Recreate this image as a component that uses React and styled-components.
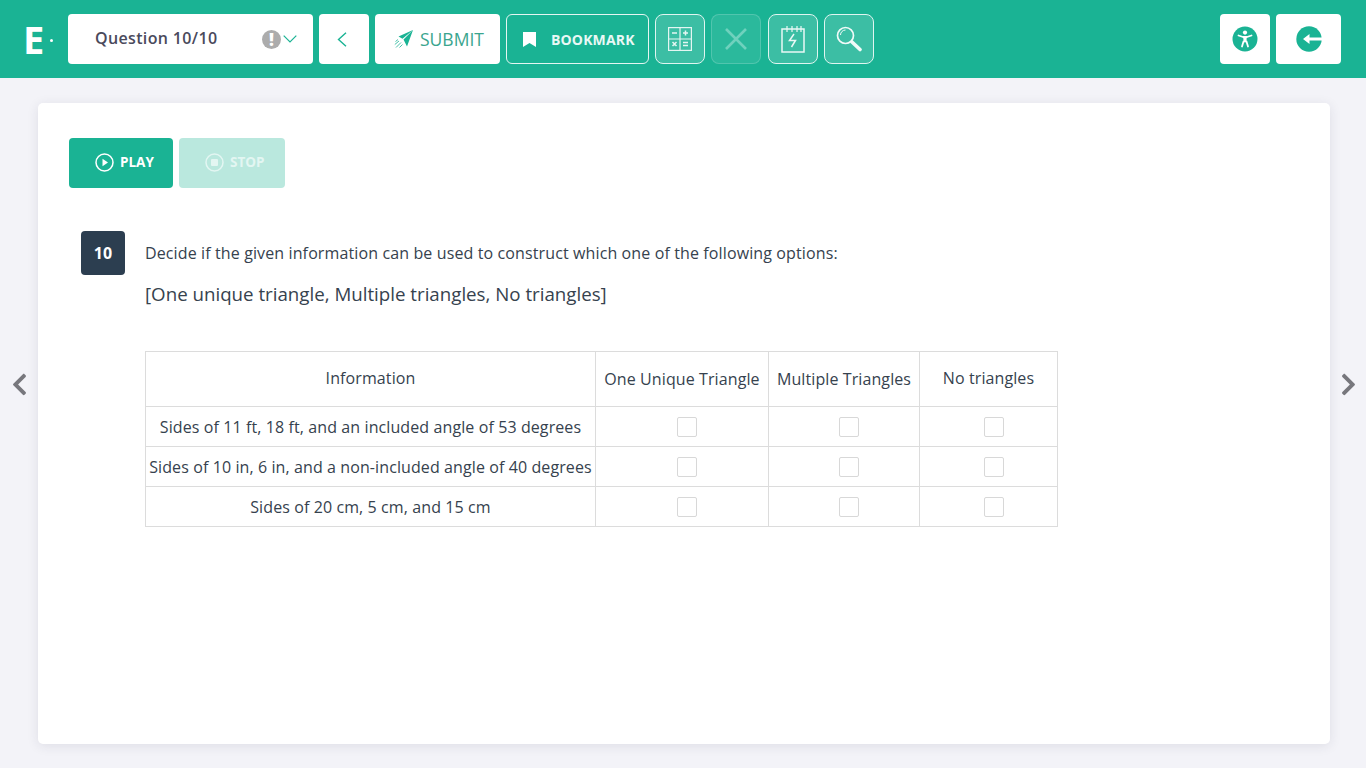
import React from "react";
import styled, { createGlobalStyle } from "styled-components";
import { FaChevronLeft, FaChevronRight } from "react-icons/fa";

const GlobalStyle = createGlobalStyle`
  html, body {
    margin: 0;
    padding: 0;
    background: #f3f3f8;
    font-family: "Open Sans", "Liberation Sans", sans-serif;
    color: #2f3d4c;
  }
  * { box-sizing: border-box; }
`;

const Page = styled.div`
  width: 1366px;
  height: 768px;
  overflow: hidden;
  display: flex;
  flex-direction: column;
`;

const Header = styled.header`
  height: 78px;
  flex: none;
  background: #1ab394;
  display: flex;
  align-items: flex-start;
  justify-content: space-between;
  padding: 14px 25px 0 25px;
`;

const ToolGroup = styled.div`
  display: flex;
  align-items: center;
`;

const Logo = styled.div`
  width: 43px;
  height: 50px;
  display: flex;
  align-items: center;
  flex: none;
  margin-left: -2px;
  margin-right: 2px;
  color: #fff;
  font-size: 38px;
  font-weight: 700;
  line-height: 1;
  span {
    width: 3px;
    height: 3px;
    margin: 2px 0 0 6px;
    border-radius: 50%;
    background: #fff;
  }
`;

const QuestionSelect = styled.div`
  width: 245px;
  height: 50px;
  background: #fff;
  border-radius: 4px;
  display: flex;
  align-items: center;
  padding: 0 16px 0 27px;
  font-size: 16px;
  font-weight: 600;
  letter-spacing: 0.35px;
  color: #4a4a5c;
  b {
    flex: 1;
    font-weight: 600;
    margin-top: -2px;
  }
`;

const Alert = styled.i`
  width: 19px;
  height: 19px;
  border-radius: 50%;
  background: #acacac;
  color: #fff;
  font-size: 17px;
  font-weight: 800;
  font-style: normal;
  letter-spacing: 0;
  line-height: 19px;
  text-align: center;
`;

const SolidButton = styled.button`
  width: ${(p) => p.$w}px;
  height: 50px;
  margin-left: ${(p) => p.$gap ?? 6}px;
  padding: 0;
  border: 0;
  border-radius: 4px;
  background: #fff;
  color: #1ab394;
  display: flex;
  align-items: center;
  justify-content: center;
  font-family: inherit;
`;

const BackButton = styled(SolidButton)`
  padding-right: 4px;
`;

const SubmitButton = styled(SolidButton)`
  justify-content: flex-start;
  padding-left: 19px;
`;

const SubmitLabel = styled.span`
  font-size: 17.5px;
  margin-left: 7px;
  color: #3aa58e;
`;

const BookmarkButton = styled.button`
  width: 143px;
  height: 50px;
  margin-left: 6px;
  padding: 0 0 0 16px;
  border: 1px solid #e4f6f2;
  border-radius: 6px;
  background: transparent;
  color: #e9f8f5;
  display: flex;
  align-items: center;
  font-family: inherit;
  font-size: 14px;
  font-weight: 700;
  letter-spacing: 0.15px;
  span {
    margin-left: 15px;
  }
`;

const GhostButton = styled.button`
  width: 50px;
  height: 50px;
  margin-left: ${(p) => p.$gap ?? 6}px;
  padding: 0;
  border-radius: 8px;
  border: 1px solid ${(p) => (p.$off ? "rgba(255,255,255,0.18)" : "#dff5f0")};
  background: rgba(255, 255, 255, ${(p) => (p.$off ? 0.08 : 0.15)});
  display: flex;
  align-items: center;
  justify-content: center;
`;

const Body = styled.main`
  flex: 1;
  display: flex;
  padding: 25px 0 24px;
`;

const Gutter = styled.div`
  width: ${(p) => p.$w}px;
  flex: none;
  display: flex;
  align-items: center;
  justify-content: center;
  padding-bottom: 78px;
  color: #77777d;
  font-size: 25px;
`;

const Card = styled.section`
  flex: 1;
  background: #fff;
  border-radius: 5px;
  box-shadow: 0 2px 12px rgba(40, 40, 70, 0.1);
  padding: 35px 31px;
`;

const AudioRow = styled.div`
  display: flex;
  gap: 6px;
`;

const AudioButton = styled.button`
  width: ${(p) => p.$w}px;
  height: 50px;
  padding: 0 0 2px 26px;
  border: 0;
  border-radius: 4px;
  background: ${(p) => (p.$off ? "#bae8de" : "#1ab394")};
  color: ${(p) => (p.$off ? "#e3f6f2" : "#fff")};
  display: flex;
  align-items: center;
  gap: 6px;
  font-family: inherit;
  font-size: 13.5px;
  font-weight: 700;
`;

const Question = styled.div`
  display: flex;
  margin: 43px 0 0 12px;
`;

const NumberBadge = styled.div`
  width: 44px;
  height: 44px;
  flex: none;
  border-radius: 4px;
  background: #2c3e50;
  color: #fff;
  font-size: 16px;
  font-weight: 700;
  line-height: 44px;
  text-align: center;
`;

const QuestionBody = styled.div`
  margin-left: 20px;
`;

const Prompt = styled.p`
  margin: 10px 0 0;
  font-size: 16px;
  line-height: 24px;
  letter-spacing: 0.12px;
  color: #36424e;
`;

const Options = styled.p`
  margin: 16px 0 0;
  font-size: 18.72px;
  line-height: 26px;
  color: #36424e;
`;

const Table = styled.table`
  margin-top: 44px;
  border-collapse: collapse;
  table-layout: fixed;
  width: 912px;
  font-size: 16px;
  letter-spacing: 0.1px;
  color: #36424e;
  th, td {
    border: 1px solid #dcdcdc;
    padding: 0;
    text-align: center;
    font-weight: 400;
    white-space: nowrap;
  }
  thead tr { height: 55px; }
  tbody tr { height: 40px; }
`;

const HeadText = styled.span`
  position: relative;
  top: ${(p) => (p.$up ? -1 : 0)}px;
`;

const Check = styled.span`
  display: block;
  width: 20px;
  height: 20px;
  margin: 0 auto;
  position: relative;
  left: 5px;
  border: 1px solid #d8d8d8;
  border-radius: 2px;
  background: #fff;
`;

const Send = () => (
  <svg width="19" height="18" viewBox="0 0 19 18" fill="#1ab394">
    <path d="M19 0 4.500 6.500l4 2.200zM19 0 9.500 9.500l3.500 7z" />
    <path d="M5 11 .8 14.500M7 12.500l-5 5M8.500 14.500l-3 3M4 9.500 1.500 11.500" stroke="#1ab394" strokeWidth="0.8" fill="none" />
  </svg>
);

const Calculator = () => (
  <svg width="24" height="24" viewBox="0 0 24 24" fill="none" stroke="#e4f6f2" strokeWidth="1.2">
    <rect x="0.6" y="0.6" width="22.8" height="22.8" />
    <path d="M12 .6v22.8M.6 12h22.8" />
    <path d="M4 6h5M15 6h5M17.500 3.500v5M15 15.500h5M15 18.500h5M4.500 15l4 4M8.500 15l-4 4" strokeWidth="1.5" />
  </svg>
);

const Cross = () => (
  <svg width="24" height="24" viewBox="0 0 24 24" stroke="#6fd1bd" strokeWidth="2.6">
    <path d="M2 2l20 20M22 2 2 22" />
  </svg>
);

const Notepad = () => (
  <svg width="24" height="28" viewBox="0 0 24 28" fill="none" stroke="#e9f8f5" strokeWidth="1.5">
    <path d="M1 4h22v23H1z" />
    <path d="M6 1v6M11 1v6M16 1v6M20 1v6" strokeWidth="1.2" />
    <path d="M13 9 8.500 15.500h6L10.500 22" />
  </svg>
);

const Magnifier = () => (
  <svg width="26" height="26" viewBox="0 0 26 26" fill="none" stroke="#f0faf8">
    <circle cx="9.5" cy="9.5" r="8" strokeWidth="1.7" />
    <path d="M4.500 9a5 5 0 0 1 5-5" strokeWidth="1" />
    <path d="M16 16l8 7.500" strokeWidth="3.6" strokeLinecap="round" />
  </svg>
);

const Accessibility = () => (
  <svg width="26" height="26" viewBox="0 0 26 26">
    <circle cx="13" cy="13" r="12.5" fill="#1ab394" />
    <circle cx="13" cy="6.6" r="2.1" fill="#fff" />
    <path d="M6.500 9.500 11 11h4l4.500-1.500M13 11v4.500M11.500 15.500 10 20.500M14.500 15.500 16 20.500" stroke="#fff" strokeWidth="1.8" strokeLinecap="round" strokeLinejoin="round" fill="none" />
    <path d="M11.200 11h3.600l-.4 5h-2.800z" fill="#fff" />
  </svg>
);

const ExitArrow = () => (
  <svg width="26" height="26" viewBox="0 0 26 26">
    <circle cx="13" cy="13" r="12.7" fill="#1ab394" />
    <path d="M26 11.500H13.500V8L7 13l6.500 5v-3.500H26z" fill="#fff" />
  </svg>
);

const PlayIcon = () => (
  <svg width="19" height="19" viewBox="0 0 19 19" fill="none">
    <circle cx="9.5" cy="9.5" r="8.5" stroke="#fff" strokeWidth="1.5" />
    <path d="M7.500 5.800 13 9.500l-5.500 3.700z" fill="#fff" />
  </svg>
);

const StopIcon = () => (
  <svg width="19" height="19" viewBox="0 0 19 19" fill="none">
    <circle cx="9.5" cy="9.5" r="8.5" stroke="#e3f6f2" strokeWidth="1.5" />
    <rect x="6" y="6" width="7" height="7" rx="1" fill="#e3f6f2" />
  </svg>
);

const BookmarkIcon = () => (
  <svg width="13" height="15" viewBox="0 0 13 15" fill="#fff">
    <path d="M0 0h13v15L6.500 11 0 15z" />
  </svg>
);

const rows = [
  "Sides of 11 ft, 18 ft, and an included angle of 53 degrees",
  "Sides of 10 in, 6 in, and a non-included angle of 40 degrees",
  "Sides of 20 cm, 5 cm, and 15 cm",
];

export default function App() {
  return (
    <Page>
      <GlobalStyle />
      <Header>
        <ToolGroup>
          <Logo>
            E<span />
          </Logo>
          <QuestionSelect>
            <b>Question 10/10</b>
            <Alert>!</Alert>
            <svg width="14" height="8" viewBox="0 0 14 8" fill="none" stroke="#1ab394" strokeWidth="1.2" style={{ marginLeft: 2 }}>
              <path d="M.7.7 7 7l6.300-6.300" />
            </svg>
          </QuestionSelect>
          <BackButton $w={50}>
            <svg width="10" height="15" viewBox="0 0 10 15" fill="none" stroke="#1ab394" strokeWidth="1.4">
              <path d="M9 .7 1.500 7.500 9 14.300" />
            </svg>
          </BackButton>
          <SubmitButton $w={125}>
            <Send />
            <SubmitLabel>SUBMIT</SubmitLabel>
          </SubmitButton>
          <BookmarkButton>
            <BookmarkIcon />
            <span>BOOKMARK</span>
          </BookmarkButton>
          <GhostButton>
            <Calculator />
          </GhostButton>
          <GhostButton $off>
            <Cross />
          </GhostButton>
          <GhostButton $gap={7}>
            <Notepad />
          </GhostButton>
          <GhostButton>
            <Magnifier />
          </GhostButton>
        </ToolGroup>
        <ToolGroup>
          <SolidButton $w={50} $gap={0}>
            <Accessibility />
          </SolidButton>
          <SolidButton $w={65}>
            <ExitArrow />
          </SolidButton>
        </ToolGroup>
      </Header>
      <Body>
        <Gutter $w={38}>
          <FaChevronLeft />
        </Gutter>
        <Card>
          <AudioRow>
            <AudioButton $w={104}>
              <PlayIcon />
              PLAY
            </AudioButton>
            <AudioButton $w={106} $off>
              <StopIcon />
              STOP
            </AudioButton>
          </AudioRow>
          <Question>
            <NumberBadge>10</NumberBadge>
            <QuestionBody>
              <Prompt>Decide if the given information can be used to construct which one of the following options:</Prompt>
              <Options>[One unique triangle, Multiple triangles, No triangles]</Options>
              <Table>
                <colgroup>
                  <col style={{ width: 450 }} />
                  <col style={{ width: 173 }} />
                  <col style={{ width: 151 }} />
                  <col style={{ width: 138 }} />
                </colgroup>
                <thead>
                  <tr>
                    <th><HeadText $up>Information</HeadText></th>
                    <th>One Unique Triangle</th>
                    <th>Multiple Triangles</th>
                    <th><HeadText $up>No triangles</HeadText></th>
                  </tr>
                </thead>
                <tbody>
                  {rows.map((row) => (
                    <tr key={row}>
                      <td>{row}</td>
                      <td><Check /></td>
                      <td><Check /></td>
                      <td><Check /></td>
                    </tr>
                  ))}
                </tbody>
              </Table>
            </QuestionBody>
          </Question>
        </Card>
        <Gutter $w={36}>
          <FaChevronRight />
        </Gutter>
      </Body>
    </Page>
  );
}
